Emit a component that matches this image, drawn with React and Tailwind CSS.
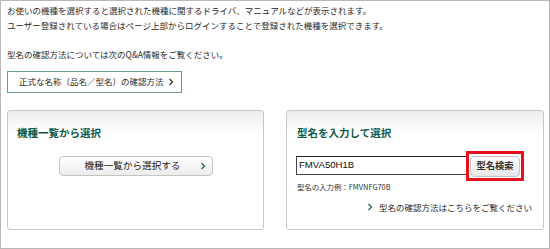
import React from "react";

const jp = { fontFamily: '"Noto Sans CJK JP", "Liberation Sans", sans-serif' };

const Chevron = ({ className = "" }) => (
  <svg className={className} width="6" height="8" viewBox="0 0 6 8" fill="none">
    <path d="M1.5 1 L4.5 4 L1.5 7" stroke="currentColor" strokeWidth="1.3" />
  </svg>
);

const App = () => {
  return (
    <div
      className="w-[550px] h-[249px] border border-[#b8b8b8] bg-white text-[#2a2a2a] pl-[6px] pt-[2px]"
      style={jp}
    >
      <p className="text-[8.5px] leading-[14.5px]">
        お使いの機種を選択すると選択された機種に関するドライバ、マニュアルなどが表示されます。
      </p>
      <p className="text-[8.5px] leading-[14.5px]">
        ユーザー登録されている場合はページ上部からログインすることで登録された機種を選択できます。
      </p>
      <p className="text-[8.5px] leading-[14.5px] mt-[15px]">
        型名の確認方法については次のQ&amp;A情報をご覧ください。
      </p>

      <button className="mt-[9px] w-[175px] h-[22px] border border-[#6a9893] bg-white flex items-center pl-[11px] pr-[7px] text-[8.5px] text-[#2a2a2a]">
        <span>正式な名称（品名／型名）の確認方法</span>
        <Chevron className="ml-auto text-[#333]" />
      </button>

      <div className="flex gap-[22px] mt-[17px]">
        {/* 機種一覧から選択 */}
        <div className="w-[257px] h-[120px] rounded-[3px] border border-[#c8c8c8] bg-gradient-to-b from-[#ececec] to-white to-[18%] pl-[9px] pt-[14px]">
          <h2 className="text-[10.5px] font-bold text-[#0e5a4a] leading-[16px]">機種一覧から選択</h2>
          <div className="flex justify-center pr-[9px] mt-[15px]">
            <button className="w-[154px] h-[20px] rounded-[4px] border border-[#c4c4c4] bg-gradient-to-b from-white to-[#ececec] flex items-center pl-[25px] pr-[6px] text-[9.6px] text-[#222]">
              <span>機種一覧から選択する</span>
              <Chevron className="ml-auto text-[#1f6b5c]" />
            </button>
          </div>
        </div>

        {/* 型名を入力して選択 */}
        <div className="w-[258px] h-[120px] rounded-[3px] border border-[#c8c8c8] bg-gradient-to-b from-[#ececec] to-white to-[18%] pl-[9px] pr-[9px] pt-[14px]">
          <h2 className="text-[10.5px] font-bold text-[#0e5a4a] leading-[16px] pl-[1px]">型名を入力して選択</h2>
          <div className="flex items-start gap-[3px] mt-[15px]">
            <div
              className="w-[171px] h-[19px] border border-[#444] border-t-[#222] bg-white flex items-center pl-[2px] text-[9.6px] text-[#111]"
              style={{ fontFamily: '"Liberation Sans", Arial, sans-serif' }}
            >
              FMVA50H1B
            </div>
            <span className="relative">
              <button className="w-[50px] h-[21px] rounded-[4px] border border-[#c4c4c4] bg-gradient-to-b from-white to-[#e6e6e6] text-[9.3px] font-bold text-[#333] flex items-center justify-center">
                型名検索
              </button>
              <span className="absolute left-[-4px] right-[-4px] top-[-5px] bottom-[-4px] border-[3px] border-[#e3111b] pointer-events-none" />
            </span>
          </div>
          <p className="text-[7.4px] leading-[10px] mt-[5px] pl-[1px] text-[#333]">
            型名の入力例：FMVNFG70B
          </p>
          <div className="flex justify-end items-center gap-[6px] mt-[9px] pr-[2px] text-[8.5px] text-[#2a2a2a]">
            <Chevron className="text-[#1f6b5c]" />
            <span>型名の確認方法はこちらをご覧ください</span>
          </div>
        </div>
      </div>
    </div>
  );
};

export default App;
